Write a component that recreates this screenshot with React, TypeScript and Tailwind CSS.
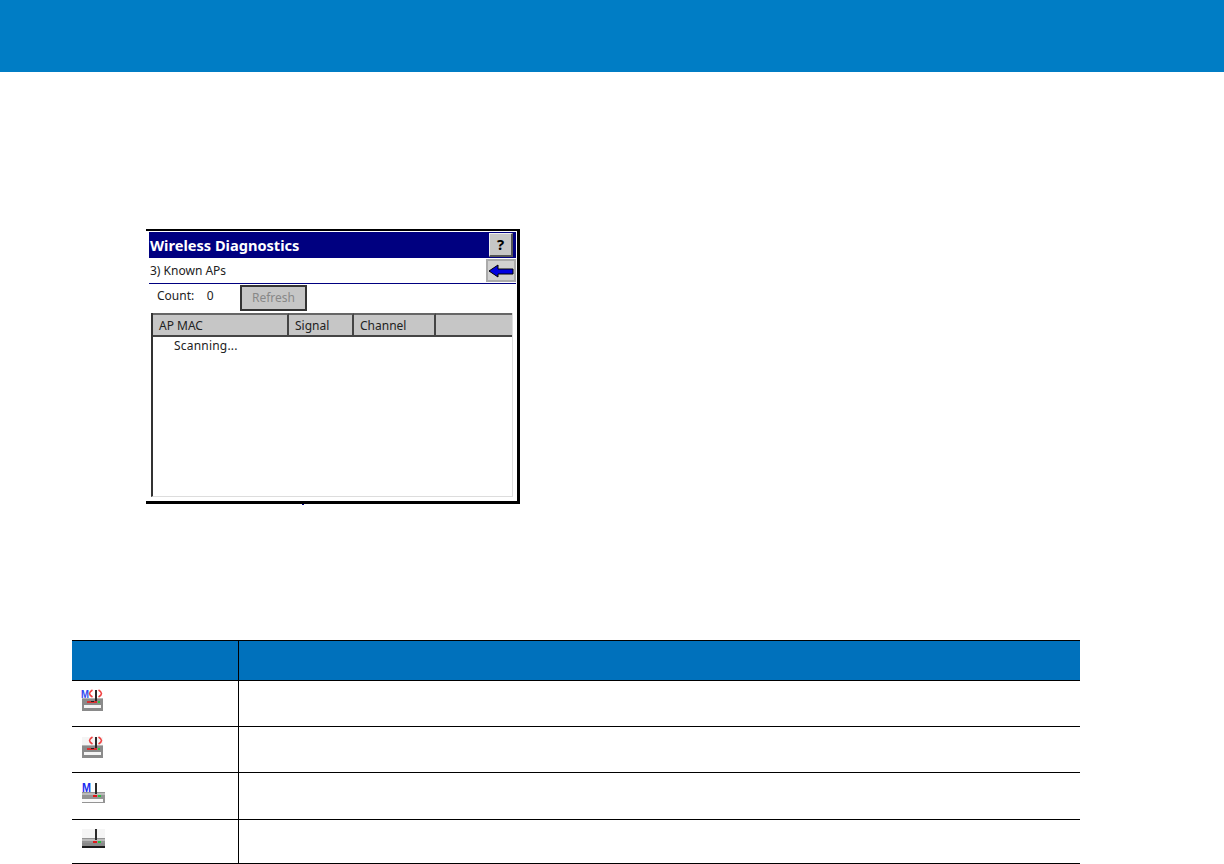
function RadioIcon({ variant }: { variant: "mesh" | "wave" | "meshWired" | "wired" }) {
  const hasM = variant === "mesh" || variant === "meshWired";
  const hasWaves = variant === "mesh" || variant === "wave";
  return (
    <svg width="26" height="24" viewBox="0 0 26 24" shapeRendering="crispEdges" className="block">
      {!hasM && <rect x="2" y="1" width={hasWaves ? 21 : 23} height="9" fill="#f5f5f5" />}
      {variant === "mesh" && (
        <text x="1" y="9" fontSize="11" fontFamily="Liberation Sans" fontWeight="700" fill="#3048f0" textLength="8" lengthAdjust="spacingAndGlyphs">M</text>
      )}
      {variant === "meshWired" && (
        <>
          <text x="2" y="10" fontSize="12" fontFamily="Liberation Sans" fontWeight="700" fill="#1a2cf0" textLength="9" lengthAdjust="spacingAndGlyphs">M</text>
          <rect x="2" y="10" width="9" height="1" fill="#1a2cf0" />
        </>
      )}
      {hasWaves && (
        <g fill="none" stroke="#f04040" strokeWidth="1.6" shapeRendering="auto">
          <path d="M12.5 1 Q6.5 4.5 12.5 8" />
          <path d="M18.5 1 Q24.5 4.5 18.5 8" />
        </g>
      )}
      {hasWaves ? (
        <>
          <rect x="2" y="9" width="21" height="13" fill="#8a8a8a" />
          <rect x="2" y="9" width="21" height="1" fill="#b4b4b4" />
          <rect x="4" y="16" width="17" height="3" fill="#f4f4f4" />
          <rect x="7" y="12" width="10" height="2" fill="#d83030" />
          <rect x="11" y="12" width="3" height="1" fill="#222" />
          <rect x="18" y="12" width="2" height="2" fill="#30c040" />
        </>
      ) : (
        <>
          <rect x="2" y="10" width="23" height="11" fill="#949494" />
          <rect x="2" y="11" width="23" height="2" fill="#bbb" />
          <rect x="13" y="13" width="4" height="2" fill="#e01818" />
          <rect x="18" y="13" width="3" height="2" fill="#28c040" />
          {variant === "meshWired" ? (
            <rect x="2" y="17" width="21" height="3" fill="#fafafa" />
          ) : (
            <>
              <rect x="2" y="15" width="23" height="3" fill="#8a8a8a" />
              <rect x="2" y="18" width="23" height="2" fill="#1c1c1c" />
              <rect x="2" y="20" width="23" height="1" fill="#fff" />
            </>
          )}
        </>
      )}
      <rect x="15" y="1" width="2" height="11" fill="#2a2a2a" />
    </svg>
  );
}

function HeaderCell({ className, children }: { className: string; children?: React.ReactNode }) {
  return (
    <div className={`flex h-[24px] items-center border-t-2 border-b-2 border-t-[#666] border-b-[#444] bg-[#c6c6c6] pl-[6px] pt-px ${className}`}>
      {children}
    </div>
  );
}

export default function App() {
  const rows = [
    { h: "h-[46px]", pt: "pt-[8px]", icon: <RadioIcon variant="mesh" /> },
    { h: "h-[46px]", pt: "pt-[9px]", icon: <RadioIcon variant="wave" /> },
    { h: "h-[47px]", pt: "pt-[9px]", icon: <RadioIcon variant="meshWired" /> },
    { h: "h-[44px]", pt: "pt-[8px]", icon: <RadioIcon variant="wired" /> },
  ];

  return (
    <div className="h-[864px] w-[1224px] overflow-hidden bg-white font-['Liberation_Sans',sans-serif]">
      <div className="h-[72px] bg-[#007dc5]" />

      <div className="ml-[146px] mt-[157px] w-[374px] border-t-2 border-r-[3px] border-b-[3px] border-black bg-white pl-[3px] pr-px pt-px pb-[4px] font-['Noto_Sans',sans-serif] text-[12px] text-[#222]">
        <div className="flex h-[26px] items-center justify-between bg-[#000080] pl-px pr-[3px]">
          <span className="pt-px text-[14.6px] font-bold text-white">Wireless Diagnostics</span>
          <div className="flex h-[24px] w-[24px] items-center justify-center border border-r-2 border-b-2 border-[#eee] border-r-[#555] border-b-[#555] bg-[#c6c6c6] text-[15px] font-bold text-black">?</div>
        </div>
        <div className="flex h-[26px] items-start justify-between border-b border-[#000080]">
          <span className="pl-px pt-[4px]">3) Known APs</span>
          <div className="mt-px flex h-[23px] w-[30px] items-center justify-center border-2 border-[#aaa] bg-[#d0d0d0]">
            <svg width="26" height="14" viewBox="0 0 26 14">
              <path d="M1 7 L10 1 L10 5 L25 5 L25 10 L10 10 L10 13 Z" fill="#0000e0" stroke="#000" strokeWidth="1" />
            </svg>
          </div>
        </div>
        <div className="flex h-[29px] items-start pl-[8px] pt-px">
          <span className="w-[83px] pt-[2px]">Count:&nbsp;&nbsp;&nbsp; 0</span>
          <div className="flex h-[26px] w-[67px] items-center justify-center border-2 border-[#333] bg-[#c6c6c6] text-[#888]">Refresh</div>
        </div>
        <div className="ml-[2px] mr-[3px] flex h-[184px] flex-col border-l-2 border-b border-r border-l-[#333] border-b-[#ddd] border-r-[#ddd]">
          <div className="flex">
            <HeaderCell className="w-[136px] border-r-2 border-r-[#444]">AP MAC</HeaderCell>
            <HeaderCell className="w-[65px] border-r-2 border-r-[#444]">Signal</HeaderCell>
            <HeaderCell className="w-[82px] border-r-2 border-r-[#444]">Channel</HeaderCell>
            <HeaderCell className="flex-1" />
          </div>
          <div className="pl-[21px] leading-[17px] tracking-[0.2px]">Scanning...</div>
        </div>
      </div>
      <div className="ml-[302px] h-px w-[2px] bg-[#000080]" />

      <div className="ml-[72px] mt-[135px] w-[1008px]">
        <div className="flex h-[41px] border-y border-black bg-[#0071bc]">
          <div className="w-[167px] border-r border-black" />
        </div>
        {rows.map((row, i) => (
          <div key={i} className={`flex border-b border-black ${row.h}`}>
            <div className={`w-[167px] border-r border-black pl-[8px] ${row.pt}`}>{row.icon}</div>
          </div>
        ))}
      </div>
    </div>
  );
}
